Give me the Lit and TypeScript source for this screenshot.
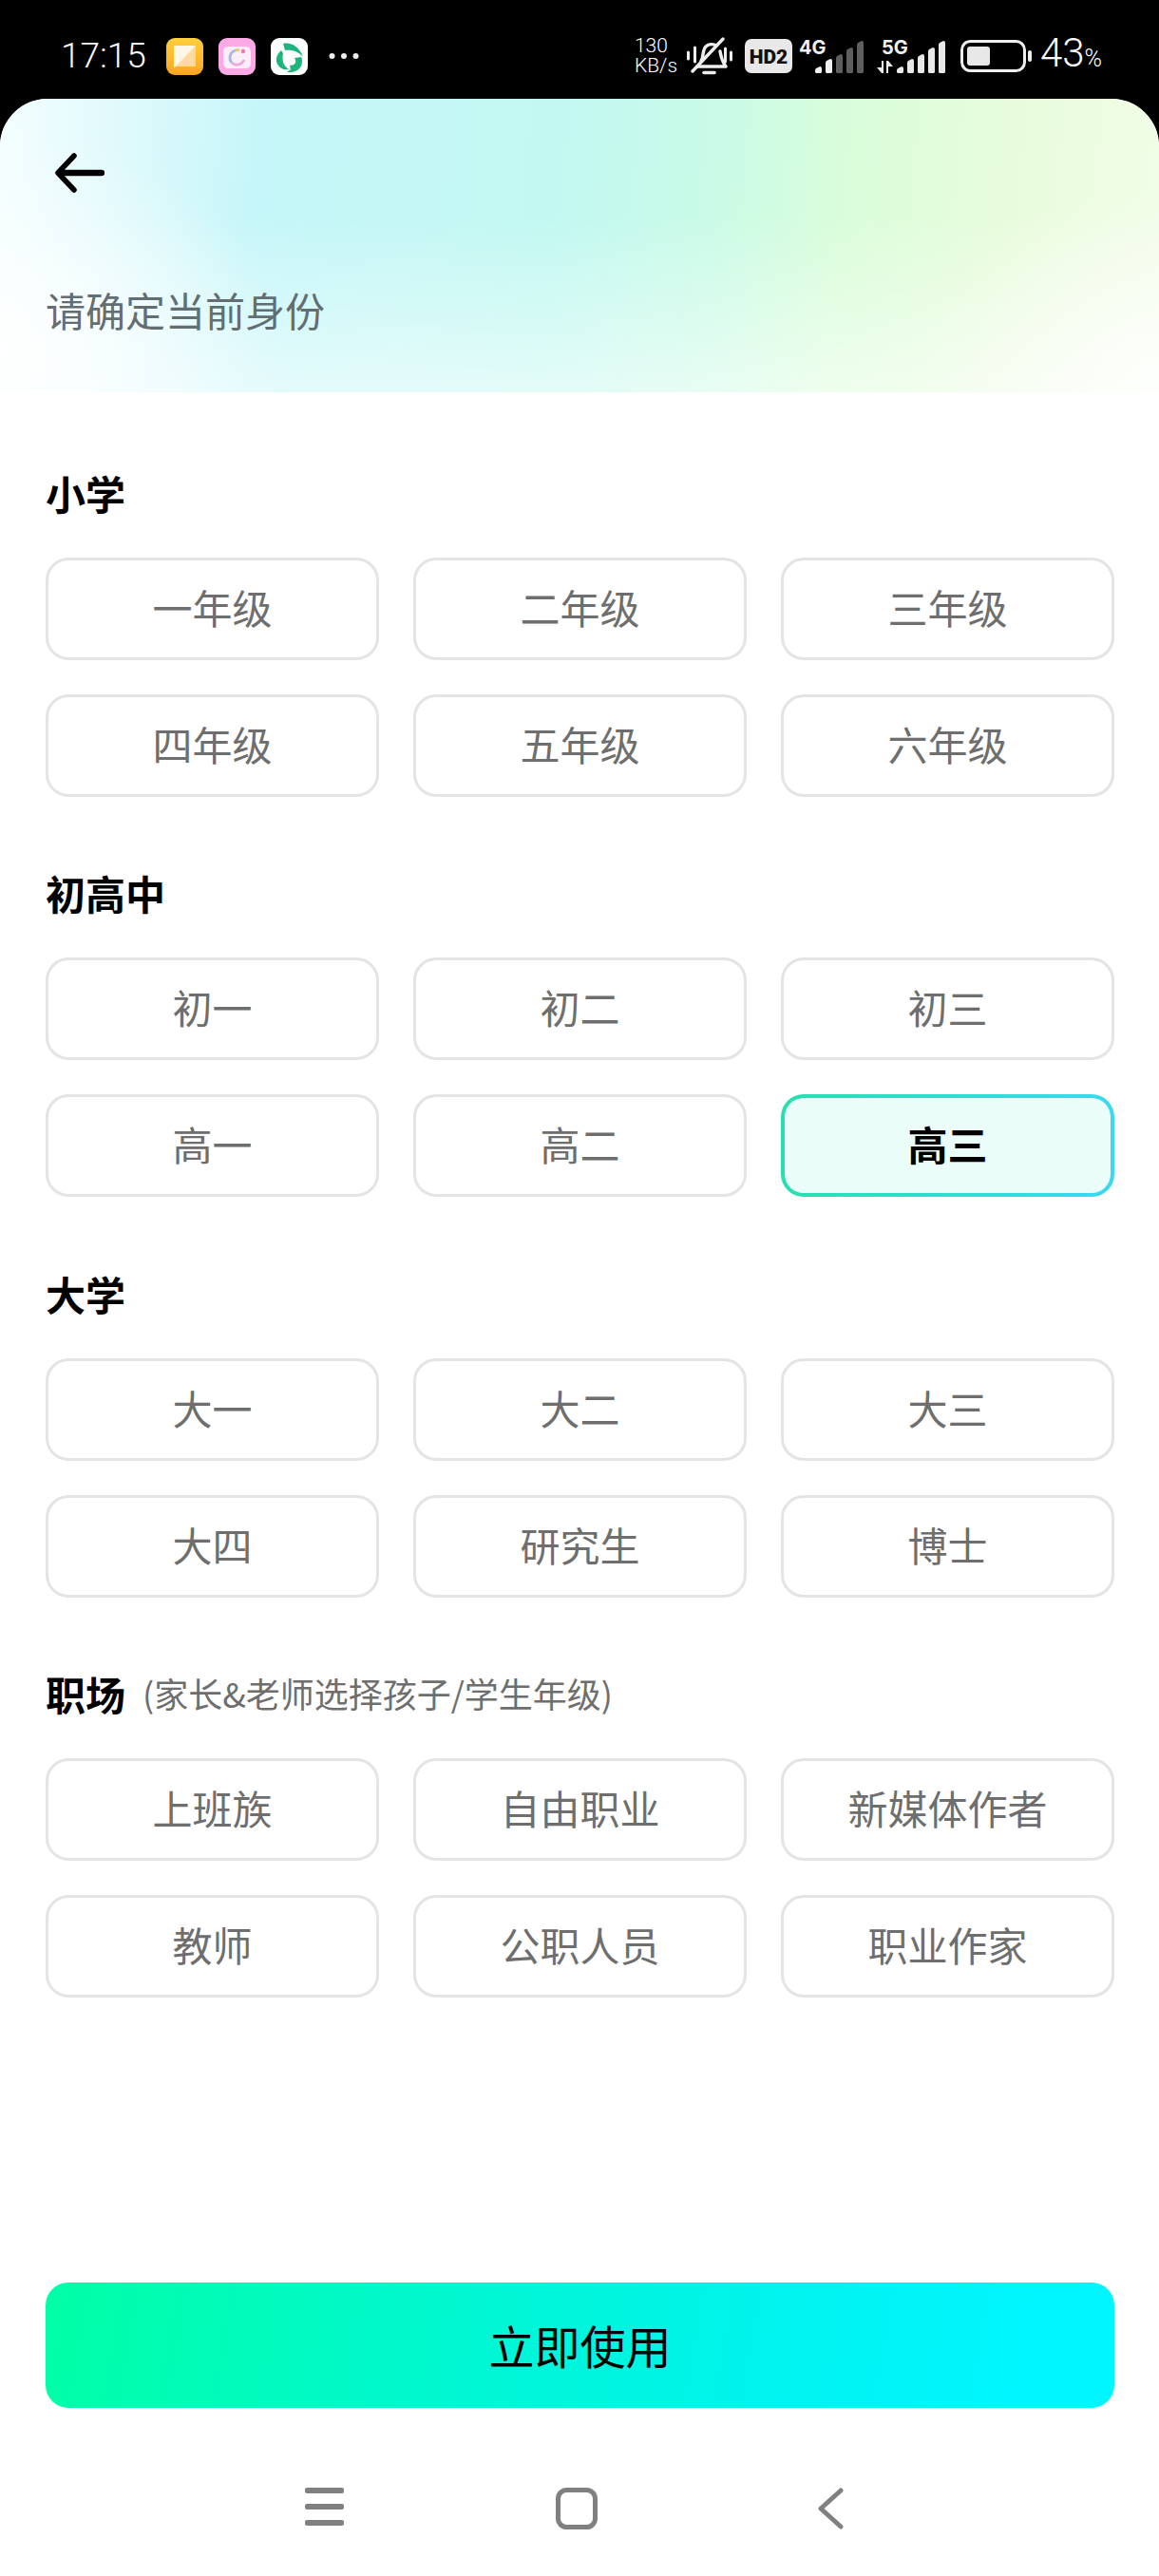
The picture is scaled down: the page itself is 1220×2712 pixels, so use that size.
import { LitElement, html, css, svg } from 'lit'
import { customElement, state } from 'lit/decorators.js'
import { classMap } from 'lit/directives/class-map.js'

interface Section {
  title: string
  hint?: string
  items: string[]
}

const SECTIONS: Section[] = [
  { title: '小学', items: ['一年级', '二年级', '三年级', '四年级', '五年级', '六年级'] },
  { title: '初高中', items: ['初一', '初二', '初三', '高一', '高二', '高三'] },
  { title: '大学', items: ['大一', '大二', '大三', '大四', '研究生', '博士'] },
  {
    title: '职场',
    hint: '(家长&老师选择孩子/学生年级)',
    items: ['上班族', '自由职业', '新媒体作者', '教师', '公职人员', '职业作家'],
  },
]

// signal bars with slanted tops, short to tall
const TOPS = [27, 19, 14, 7, 0]
const bars = (bright: number, color: string, dim: string) =>
  TOPS.map((top, i) => {
    const x = i * 11
    return svg`<path
      d="M${x} 32.5V${top + 4}Q${x} ${top + 2} ${x + 2} ${top + 1.5}L${x + 5} ${top}Q${x + 7} ${top} ${x + 7} ${top + 2}V32.5Q${x + 7} 34 ${x + 5.5} 34H${x + 1.5}Q${x} 34 ${x} 32.5Z"
      fill="${i < bright ? color : dim}"
    />`
  })

@customElement('app-root')
class App extends LitElement {
  static styles = css`
    :host {
      display: block;
      font-family: 'Noto Sans CJK SC', 'Liberation Sans', sans-serif;
      background: #000;
    }
    .page {
      height: 2712px;
      display: flex;
      flex-direction: column;
      overflow: hidden;
    }
    .status {
      height: 104px;
      flex: none;
      display: flex;
      align-items: center;
      box-sizing: border-box;
      padding: 14px 60px 0 64px;
      color: #fff;
      font-family: Roboto, sans-serif;
    }
    .status-left,
    .status-right {
      display: flex;
      align-items: center;
    }
    .status-right {
      margin-left: auto;
    }
    .time {
      font-size: 37px;
      font-weight: 300;
      line-height: 40px;
      width: 111px;
    }
    .app-icon {
      display: block;
      margin-right: 16px;
    }
    .dots {
      display: block;
      margin-left: 6px;
    }
    .speed {
      font-size: 21px;
      line-height: 21px;
      width: 43px;
      font-weight: 300;
      white-space: nowrap;
    }
    .bell {
      display: block;
      margin-left: 12px;
    }
    .hd {
      display: block;
      margin-left: 13px;
    }
    .net {
      position: relative;
      width: 68px;
      height: 40px;
      margin-left: 7px;
    }
    .net.five {
      width: 72px;
      margin-left: 14px;
    }
    .net svg {
      position: absolute;
      right: 0;
      bottom: 2px;
    }
    .net svg.arrows {
      left: 0;
      right: auto;
      bottom: 2px;
    }
    .net span {
      position: absolute;
      left: 0;
      top: 1px;
      font-family: Inter, Roboto, sans-serif;
      font-size: 20px;
      line-height: 20px;
      font-weight: 700;
      color: #f0f0f0;
    }
    .net.five span {
      left: 5px;
    }
    .batt {
      display: block;
      margin: 0 9px 0 16px;
    }
    .pct {
      font-size: 42px;
      font-weight: 300;
      line-height: 40px;
    }
    .pct small {
      font-size: 25px;
    }
    .main {
      flex: 1;
      display: flex;
      flex-direction: column;
      background: #fff;
      border-radius: 50px 50px 0 0;
      overflow: hidden;
    }
    .head {
      height: 309px;
      flex: none;
      box-sizing: border-box;
      padding: 57px 48px 0;
      background:
        radial-gradient(ellipse 300px 240px at 0% 85%, rgba(255, 255, 255, 0.9), rgba(255, 255, 255, 0) 100%),
        radial-gradient(ellipse 260px 220px at 100% 100%, rgba(255, 255, 255, 0.7), rgba(255, 255, 255, 0) 100%),
        linear-gradient(to bottom, rgba(255, 255, 255, 0) 40%, rgba(255, 255, 255, 0.55) 100%),
        linear-gradient(96deg, #f4feff 0%, #e2fafc 9%, #c6f6f9 22%, #c2f8f1 48%, #cbfbe6 62%, #dafdda 72%, #e8fcdc 86%, #f2fde8 100%);
    }
    .back {
      display: block;
      margin-left: 10px;
    }
    .page-title {
      margin-top: 93px;
      font-size: 42px;
      line-height: 60px;
      color: #636e72;
    }
    .content {
      padding: 78px 47px 0 48px;
    }
    .section {
      margin-bottom: 73.33px;
    }
    .section-head {
      display: flex;
      align-items: center;
      height: 60px;
      box-sizing: border-box;
      padding-bottom: 5px;
      margin-bottom: 36px;
    }
    .section-title {
      font-size: 42px;
      font-weight: 700;
      color: #000;
    }
    .section-hint {
      font-size: 36px;
      color: #6e6e6e;
      margin-left: 18px;
    }
    .grid {
      display: grid;
      grid-template-columns: repeat(3, 351px);
      gap: 36px;
    }
    .option {
      height: 108px;
      box-sizing: border-box;
      border: 3px solid #e4e4e4;
      border-radius: 24px;
      padding-bottom: 5px;
      display: flex;
      align-items: center;
      justify-content: center;
      font-size: 42px;
      color: #6e6e6e;
      background: #fff;
      cursor: pointer;
    }
    .option.active {
      border: 4px solid transparent;
      background:
        linear-gradient(#ebfdf9, #ebfdf9) padding-box,
        linear-gradient(90deg, #27e0ae, #38d9f2) border-box;
      color: #000;
      font-weight: 700;
    }
    .foot {
      margin-top: auto;
      padding: 0 47px 0 48px;
    }
    .cta {
      height: 132px;
      box-sizing: border-box;
      padding-bottom: 2px;
      border-radius: 24px;
      display: flex;
      align-items: center;
      justify-content: center;
      font-size: 48px;
      color: #000;
      background: linear-gradient(100deg, #00ffa6 0%, #00f6d8 45%, #00f3f0 70%, #00f6ff 92%);
    }
    .nav {
      height: 177px;
      box-sizing: border-box;
      display: flex;
      align-items: flex-start;
      padding: 84px 0 0 321px;
      margin-left: -48px;
      gap: 223px;
    }
    .nav svg {
      display: block;
    }
    .nav svg + svg + svg {
      margin-left: 8px;
    }
  `

  @state()
  selected = '高三'

  renderStatus() {
    return html`
      <div class="status">
        <div class="status-left">
          <div class="time">17:15</div>
          <svg class="app-icon" width="39" height="39" viewBox="0 0 39 39">
            <defs>
              <linearGradient id="note" x1="0" y1="0" x2="0" y2="1">
                <stop offset="0" stop-color="#ffcf3c" />
                <stop offset="1" stop-color="#ffa51f" />
              </linearGradient>
            </defs>
            <rect width="39" height="39" rx="9" fill="url(#note)" />
            <path d="M8 8H31V30H8Z" fill="#ffd9a0" />
            <path d="M8 8H31L8 32Z" fill="#fff6e6" />
          </svg>
          <svg class="app-icon" width="39" height="39" viewBox="0 0 39 39">
            <rect width="39" height="39" rx="9" fill="#fcaae6" />
            <path d="M11 9h17q6 0 6 6v11q0 6-6 6H11q-6 0-6-6V15q0-6 6-6Z" fill="#fbeef9" />
            <path d="M14 26a8 8 0 0 1 4-13" fill="none" stroke="#9fb9e8" stroke-width="2.800" />
            <path d="M14 26a8 8 0 0 0 13-3" fill="none" stroke="#eaa8d8" stroke-width="2.800" />
            <path d="M18 13a8 8 0 0 1 4-.2" fill="none" stroke="#f3c06a" stroke-width="2.800" />
            <circle cx="26" cy="14" r="2.200" fill="#f277b8" />
          </svg>
          <svg class="app-icon" width="39" height="39" viewBox="0 0 39 39">
            <rect width="39" height="39" rx="9" fill="#fff" />
            <path d="M13 6C21 4 30 9 34 20C29 14 22 12 15 13Z" fill="#1cb67c" />
            <path d="M11 13C6 17 4 24 8 29C10 32 14 34 19 33C15 30 11 26 13 16Z" fill="#1cb67c" />
            <path d="M25 21C28 26 25 29 20 29L21 33L17 36C25 37 33 33 33 25C33 23 33 22 32 20Z" fill="#1cb67c" />
          </svg>
          <svg class="dots" width="32" height="8" viewBox="0 0 32 8" fill="#ececec">
            <circle cx="3.500" cy="4" r="3" />
            <circle cx="16" cy="4" r="3" />
            <circle cx="28.500" cy="4" r="3" />
          </svg>
        </div>
        <div class="status-right">
          <div class="speed">130<br />KB/s</div>
          <svg class="bell" width="48" height="40" viewBox="0 0 48 40" fill="none" stroke="#eee" stroke-width="3.400" stroke-linecap="round" stroke-linejoin="round">
            <path d="M15 25c3-4 1-11 5-15 3-3 8-3 11-1" />
            <path d="M35 15c1 5 1 9 6 16H11" />
            <path d="M38 2 6 36" />
            <path d="M18 37.500h11" stroke-width="3.600" />
            <path d="M1.500 16v7M8.500 11v15M40.500 12v14M46.500 16v8" stroke-width="3" />
          </svg>
          <svg class="hd" width="50" height="36" viewBox="0 0 50 36">
            <rect width="50" height="36" rx="7" fill="#e8e8e8" />
            <text x="25" y="26" text-anchor="middle" font-family="Roboto, sans-serif" font-weight="900" font-size="21" fill="#111">HD2</text>
          </svg>
          <div class="net">
            <span>4G</span>
            <svg width="51" height="34" viewBox="0 0 51 34">${bars(2, '#f0f0f0', '#5e5e5e')}</svg>
          </div>
          <div class="net five">
            <span>5G</span>
            <svg class="arrows" width="17" height="13" viewBox="0 0 17 13" fill="#e8e8e8">
              <path d="M5 0h2v13H5l-5-6h5Z" />
              <path d="M10 0h2l5 6h-5v7h-2Z" />
            </svg>
            <svg width="51" height="34" viewBox="0 0 51 34">${bars(5, '#e8e8e8', '#e8e8e8')}</svg>
          </div>
          <svg class="batt" width="75" height="34" viewBox="0 0 75 34">
            <rect x="1.500" y="1.500" width="66" height="31" rx="9" fill="none" stroke="#eee" stroke-width="3" />
            <rect x="7" y="7" width="24" height="20" rx="3" fill="#e8e8e8" />
            <rect x="71" y="11" width="4" height="12" rx="2" fill="#eee" />
          </svg>
          <div class="pct">43<small>%</small></div>
        </div>
      </div>
    `
  }

  renderSection(section: Section) {
    return html`
      <div class="section">
        <div class="section-head">
          <span class="section-title">${section.title}</span>
          ${section.hint ? html`<span class="section-hint">${section.hint}</span>` : ''}
        </div>
        <div class="grid">
          ${section.items.map(
            (item) => html`
              <div
                class="option ${classMap({ active: item === this.selected })}"
                @click=${() => (this.selected = item)}
              >
                ${item}
              </div>
            `,
          )}
        </div>
      </div>
    `
  }

  render() {
    return html`
      <div class="page" lang="zh-CN">
        ${this.renderStatus()}
        <div class="main">
          <div class="head">
            <svg class="back" width="52" height="42" viewBox="0 0 52 42" fill="none" stroke="#000" stroke-linecap="round" stroke-linejoin="round">
              <path d="M20 3 3 21l17 18" stroke-width="5.500" />
              <path d="M5 21h44" stroke-width="6.500" />
            </svg>
            <div class="page-title">请确定当前身份</div>
          </div>
          <div class="content">${SECTIONS.map((s) => this.renderSection(s))}</div>
          <div class="foot">
            <div class="cta">立即使用</div>
            <div class="nav">
              <svg width="41" height="40" viewBox="0 0 41 40" fill="#808080">
                <rect y="0" width="41" height="6" rx="2" />
                <rect y="17" width="41" height="6" rx="2" />
                <rect y="34" width="41" height="6" rx="2" />
              </svg>
              <svg width="44" height="44" viewBox="0 0 44 44" fill="none" stroke="#808080" stroke-width="5">
                <rect x="2.500" y="2.500" width="39" height="39" rx="9" />
              </svg>
              <svg width="28" height="44" viewBox="0 0 28 44" fill="none" stroke="#808080" stroke-width="5" stroke-linecap="round" stroke-linejoin="round">
                <path d="M25 3 4 22l21 19" />
              </svg>
            </div>
          </div>
        </div>
      </div>
    `
  }
}
export default App
